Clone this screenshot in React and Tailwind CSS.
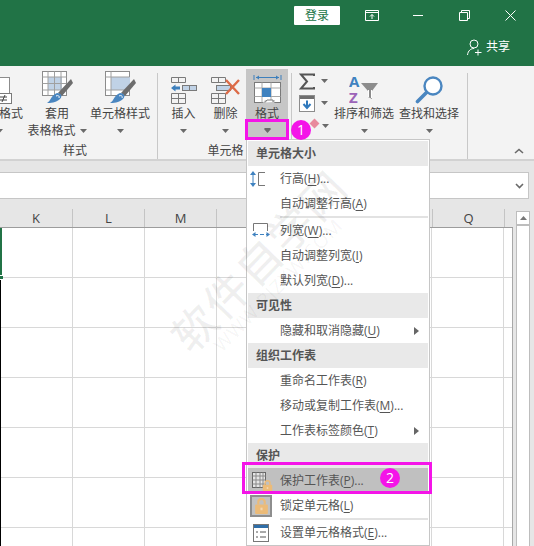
const Caret = ({ className = "" }) => (
  <svg width="7" height="4" viewBox="0 0 7 4" className={className}>
    <path d="M0 0H7L3.5 4Z" fill="#6a6a6a" />
  </svg>
);

const TableBrush = ({ variant }) => (
  <svg width="32" height="34" viewBox="0 0 32 34">
    <rect x="1.5" y="1.5" width="24" height="24" fill="#fff" stroke="#8c8c8c" />
    {variant === "a" ? (
      <>
        <rect x="7" y="7" width="14" height="13" fill="#c0d2e6" />
        <path d="M1.5 7H25.5M1.5 13.5H25.5M1.5 20H25.5M7 1.5V25.5M13.5 1.5V25.5M20 1.5V25.5" stroke="#a0a0a0" />
      </>
    ) : (
      <>
        <rect x="7" y="7" width="19" height="13" fill="#c0d2e6" />
        <path d="M1.5 7H25.5M1.5 20H25.5M7 1.5V25.5M20 20V25.5" stroke="#a0a0a0" />
      </>
    )}
    <path d="M30 9L32 13L21 26L17 23Z" fill="#6d6d6d" />
    <path d="M16 23C20 23 22 26 19 29C15 33 9 33 6 33C10 31 10 25 16 23Z" fill="#4a86c0" />
    <path d="M15 26C17 25 19 26 18 28" stroke="#fff" fill="none" />
  </svg>
);

const InsertIcon = () => (
  <svg width="28" height="28" viewBox="0 0 28 28">
    <path d="M1.5 1.5H15.5V6.5H1.5ZM8.5 1.5V6.5M1.5 17.5H15.5V27.5H1.5ZM1.5 22.5H15.5M8.5 17.5V27.5" fill="none" stroke="#7a7a7a" />
    <rect x="12.5" y="9.5" width="14" height="5" fill="#c0d2e6" stroke="#7a7a7a" />
    <path d="M19.5 9.5V14.5" stroke="#7a7a7a" />
    <path d="M1 12L5.5 8.5V10.5H10V13.5H5.5V15.5Z" fill="#3d7fbc" />
  </svg>
);

const DeleteIcon = () => (
  <svg width="31" height="28" viewBox="0 0 31 28">
    <path d="M1.5 1.5H15.5V6.5H1.5ZM8.5 1.5V6.5M1.5 17.5H15.5V27.5H1.5ZM1.5 22.5H15.5M8.5 17.5V27.5" fill="none" stroke="#7a7a7a" />
    <rect x="6.5" y="9.5" width="14" height="5" fill="#c0d2e6" stroke="#7a7a7a" />
    <path d="M16 4L29 18M29 4L16 18" stroke="#dd6b47" strokeWidth="2.4" />
  </svg>
);

const FormatIcon = () => (
  <svg width="29" height="30" viewBox="0 0 29 30">
    <path d="M1 1V6M28 1V6M3 3.5H26" stroke="#3d7fbc" fill="none" />
    <path d="M3 3.5L6 1.5V5.5ZM26 3.5L23 1.5V5.5Z" fill="#3d7fbc" />
    <rect x="1.5" y="8.5" width="26" height="20" fill="#fff" stroke="#7a7a7a" />
    <path d="M1.5 14H27.5M1.5 22.5H27.5M9 8.5V28.5M18 8.5V28.5" stroke="#a8a8a8" />
    <rect x="9" y="14" width="9" height="9" fill="#3f82c0" />
    <path d="M9 30L12 26H22L21 30Z" fill="#c6c6c6" />
    <path d="M12 28.5L14 26H20V28" fill="#fff" stroke="#7a7a7a" />
  </svg>
);

const SortIcon = () => (
  <svg width="30" height="30" viewBox="0 0 30 30">
    <text x="0" y="13" fontSize="15" fontWeight="700" fill="#3f82c0" fontFamily="'Open Sans',sans-serif">A</text>
    <text x="0" y="29" fontSize="15" fontWeight="700" fill="#9c64b8" fontFamily="'Open Sans',sans-serif">Z</text>
    <path d="M12 9H29L23 17V25L19 23V17Z" fill="#8c8c8c" />
    <path d="M19.5 16V23M22.5 16V24" stroke="#fff" fill="none" />
  </svg>
);

const SearchIcon = () => (
  <svg width="28" height="28" viewBox="0 0 28 28">
    <circle cx="18" cy="10" r="8.5" fill="#fff" stroke="#4a86c0" strokeWidth="2.4" />
    <path d="M11.5 16.5L2.5 25.5" stroke="#4a86c0" strokeWidth="3.6" strokeLinecap="round" />
  </svg>
);

const RibbonButton = ({ width, icon, line1, line2, caretInline, active, margin = "", iconBox = "h-[36px]" }) => (
  <div className={`flex flex-col items-center shrink-0 h-[69px] ${width} ${margin} ${active ? "bg-[#c6c6c6]" : ""}`}>
    <div className={`flex items-end justify-center ${iconBox}`}>{icon}</div>
    <div className="h-[18px] mt-[1px] leading-[18px] whitespace-nowrap text-[12px] text-[#444]">{line1}</div>
    <div className="h-[14px] mt-[1px] flex items-center justify-center gap-[4px] whitespace-nowrap text-[12px] text-[#444] leading-[14px]">
      {line2 && <span>{line2}</span>}
      {caretInline && <Caret />}
    </div>
  </div>
);

const Sep = ({ margin }) => <div className={`w-px h-[86px] mt-[4px] bg-[#c8c8c8] shrink-0 ${margin}`} />;

const U = ({ children }) => <span className="underline underline-offset-2">{children}</span>;

const MenuHeader = ({ children }) => (
  <div className="h-[25px] leading-[25px] pl-[8px] bg-[#e9e9e9] text-[12px] font-bold text-[#555]">{children}</div>
);

const MenuItem = ({ icon, children, arrow, selected, iconBoxed }) => (
  <div className={`h-[25px] flex items-center text-[12px] text-[#555] ${selected ? "bg-[#c0c0c0]" : ""}`}>
    <div className={`w-[22px] h-[22px] ml-[2px] mr-[8px] shrink-0 flex items-center justify-center ${iconBoxed ? "bg-[#c2c2c2] border-2 border-[#8e8e8e]" : ""}`}>{icon}</div>
    <div className="grow whitespace-nowrap">{children}</div>
    {arrow && (
      <svg width="5" height="8" viewBox="0 0 5 8" className="mr-[9px]">
        <path d="M0 0L5 4L0 8Z" fill="#666" />
      </svg>
    )}
  </div>
);

const MenuSep = () => <div className="h-[2px] ml-[32px] bg-[#e2e2e2]" />;

const Badge = ({ n, className }) => (
  <div className={`absolute w-[20px] h-[20px] rounded-full bg-[#f414e8] text-white text-[14px] leading-[20px] text-center ${className}`}>{n}</div>
);

const Lock = ({ w = 14, h = 16 }) => (
  <svg width={w} height={h} viewBox="0 0 14 16" className="shrink-0">
    <path d="M4 7V4.5C4 1 10 1 10 4.5V7" fill="none" stroke="#ecbb78" strokeWidth="2" />
    <rect x="1" y="7" width="12" height="9" rx="1" fill="#ecbb78" />
    <rect x="6" y="10" width="2" height="2.5" fill="#fff" opacity="0.4" />
  </svg>
);

const colWidths = ["w-[73px]", "w-[72px]", "w-[72px]", "w-[72px]", "w-[72px]", "w-[72px]", "w-[72px]", "w-[8px]"];
const colNames = ["K", "L", "M", "", "", "", "Q", ""];

export default function App() {
  return (
    <div className="relative w-[534px] h-[546px] overflow-hidden bg-[#e6e6e6] font-['Open_Sans','Noto_Sans_CJK_SC',sans-serif]">
      {/* Title bar */}
      <div className="h-[66px] bg-[#217346] text-white">
        <div className="h-[32px] flex items-start justify-end pt-[6px]">
          <div className="w-[46px] h-[19px] bg-white text-[#217346] text-[12px] leading-[19px] text-center rounded-[1px]">登录</div>
          <svg width="14" height="11" viewBox="0 0 14 11" className="ml-[25px] mt-[4px]">
            <path d="M.5.5H13.5V10.5H.5ZM.5 2.5H13.5M7 9V4.5M5 6.5L7 4.5L9 6.5" fill="none" stroke="#fff" />
          </svg>
          <div className="w-[10px] h-px bg-white ml-[34px] mt-[9px]" />
          <svg width="11" height="11" viewBox="0 0 11 11" className="ml-[36px] mt-[4px]">
            <path d="M.5 2.5H8.5V10.5H.5ZM2.5 2.5V.5H10.5V8.5H8.5" fill="none" stroke="#fff" />
          </svg>
          <svg width="11" height="11" viewBox="0 0 11 11" className="ml-[35px] mr-[18px] mt-[4px]">
            <path d="M.5.5L10.5 10.5M10.5.5L.5 10.5" stroke="#fff" />
          </svg>
        </div>
        <div className="flex items-center justify-end h-[30px] pr-[24px] gap-[4px]">
          <svg width="15" height="17" viewBox="0 0 15 17">
            <circle cx="7" cy="5" r="4" fill="none" stroke="#fff" />
            <path d="M.5 16C1 11.5 4 9.5 7 9.5" fill="none" stroke="#fff" />
            <path d="M8 13.5H14.5M11 10.5V16.5" stroke="#fff" />
          </svg>
          <span className="text-[12px]">共享</span>
        </div>
      </div>

      {/* Ribbon */}
      <div className="relative h-[95px] bg-[#f3f3f3] border-b-2 border-[#d2d2d2]">
        <div className="flex h-full pt-[3px]">
          <div className="flex flex-col items-center">
            <div className="flex">
              <RibbonButton
                width="w-[48px]"
                margin="ml-[-25px] mr-[4px]"
                caretInline
                line1="条件格式"
                icon={
                  <svg width="26" height="28" viewBox="0 0 26 28">
                    <rect x="1.5" y="1.5" width="22" height="20" fill="#fff" stroke="#8c8c8c" />
                    <rect x="7" y="7" width="7" height="7" fill="#3f82c0" />
                    <rect x="7" y="14" width="7" height="5" fill="#dd6b47" />
                    <rect x="9.5" y="17.5" width="16" height="10" fill="#fff" stroke="#7a7a7a" />
                    <path d="M14 21H21M14 24H21M19 19L16 26" stroke="#444" fill="none" />
                  </svg>
                }
              />
              <RibbonButton width="w-[60px]" margin="mr-[3px]" caretInline line1="套用" line2="表格格式" icon={<TableBrush variant="a" />} />
              <RibbonButton width="w-[60px]" caretInline line1="单元格样式" icon={<TableBrush variant="b" />} />
            </div>
            <div className="text-[12px] text-[#444] leading-[16px] mt-[5px]">样式</div>
          </div>
          <Sep margin="ml-[7px] mr-[5px]" />
          <div className="flex flex-col items-center">
            <div className="flex">
              <RibbonButton width="w-[41px]" margin="mr-px" caretInline line1="插入" icon={<InsertIcon />} />
              <RibbonButton width="w-[41px]" caretInline line1="删除" icon={<DeleteIcon />} />
              <RibbonButton width="w-[42px]" active caretInline line1="格式" icon={<FormatIcon />} />
            </div>
            <div className="text-[12px] text-[#444] leading-[16px] mt-[5px]">单元格</div>
          </div>
          <Sep margin="ml-[3px] mr-[7px]" />
          <div className="flex flex-col w-[34px] shrink-0 gap-[4px] pt-[3px]">
            <div className="flex items-center gap-[6px] h-[18px]">
              <svg width="16" height="17" viewBox="0 0 16 17"><path d="M15 3V1.5H2L8 8.5L2 15.5H15V14" fill="none" stroke="#555" strokeWidth="2" /></svg>
              <Caret />
            </div>
            <div className="flex items-center gap-[4px] h-[18px]">
              <svg width="16" height="17" viewBox="0 0 16 17">
                <rect x=".5" y=".5" width="15" height="16" fill="#fff" stroke="#8c8c8c" />
                <rect x="1" y="1" width="14" height="3" fill="#6e6e6e" />
                <path d="M8 5.5V12M4.5 9L8 13L11.5 9" fill="none" stroke="#2f79bd" strokeWidth="2" />
              </svg>
              <Caret className="ml-[2px]" />
            </div>
            <div className="flex items-center h-[18px] pl-[23px] pt-[1px]">
              <Caret />
            </div>
          </div>
          <RibbonButton width="w-[62px]" caretInline line1="排序和筛选" icon={<SortIcon />} />
          <RibbonButton width="w-[62px]" margin="ml-[3px]" caretInline line1="查找和选择" icon={<SearchIcon />} />
          <Sep margin="ml-[7px]" />
          <div className="grow flex justify-end items-end pr-[10px] pb-[5px]">
            <svg width="10" height="6" viewBox="0 0 10 6"><path d="M1 5L5 1.5L9 5" fill="none" stroke="#6a6a6a" strokeWidth="1.6" /></svg>
          </div>
        </div>
      </div>

      {/* Formula bar */}
      <div className="h-[11px]" />
      <div className="h-[27px] w-[529px] bg-white border-y border-r border-[#c6c6c6] flex items-center justify-end pr-[4px]">
        <svg width="9" height="6" viewBox="0 0 9 6"><path d="M1 1L4.5 4.5L8 1" fill="none" stroke="#6a6a6a" strokeWidth="1.6" /></svg>
      </div>
      <div className="h-[10px]" />

      {/* Sheet */}
      <div className="flex">
        <div className="w-[513px] shrink-0">
          <div className="flex h-[19px] border-b border-[#9c9c9c]">
            {colWidths.map((w, i) => (
              <div key={i} className={`${w} text-center text-[13px] leading-[18px] text-[#444] ${i < 7 ? "border-r border-[#c4c4c4]" : ""}`}>{colNames[i]}</div>
            ))}
          </div>
          <div className="relative bg-white h-[320px] border-r border-[#a8a8a8]">
            {[0, 1, 2, 3, 4, 5, 6].map((r) => (
              <div key={r} className="flex h-[50px] border-b border-[#d8d8d8]">
                {colWidths.map((w, i) => (
                  <div key={i} className={`${w} ${i < 7 ? "border-r border-[#d8d8d8]" : ""}`} />
                ))}
              </div>
            ))}
            <div className="absolute left-0 top-0 w-[2px] h-[47px] bg-[#217346]" />
            <div className="absolute left-0 top-[48px] w-[3px] h-[3px] bg-[#217346]" />
            <div className="absolute left-0 top-[52px] bottom-0 w-px bg-black" />
          </div>
        </div>
        <div className="ml-[3px] w-[14px] mt-[2px] bg-white border-x border-[#bdbdbd] h-[340px]">
          <div className="h-[15px] border-y-2 border-t border-[#bdbdbd] flex items-center justify-center bg-white">
            <svg width="7" height="4" viewBox="0 0 7 4"><path d="M0 4H7L3.5 0Z" fill="#777" /></svg>
          </div>
        </div>
      </div>

      {/* Dropdown menu */}
      <div className="absolute left-[246px] top-[139px] w-[184px] h-[407px] bg-white border border-[#c6c6c6] p-px">
        <MenuHeader>单元格大小</MenuHeader>
        <MenuItem icon={
          <svg width="22" height="16" viewBox="0 0 22 16">
            <path d="M3 2V14" stroke="#3f82c0" /><path d="M3 0L6 4H0ZM3 16L6 12H0Z" fill="#3f82c0" />
            <path d="M15 1.5H8.5V14.5H15" fill="none" stroke="#777" />
          </svg>
        }>行高(<U>H</U>)...</MenuItem>
        <MenuItem>自动调整行高(<U>A</U>)</MenuItem>
        <MenuSep />
        <MenuItem icon={
          <svg width="18" height="15" viewBox="0 0 18 15">
            <path d="M1.5 8V.5H15.5V8" fill="none" stroke="#777" />
            <path d="M2 11.5H16" stroke="#3f82c0" strokeDasharray="4 2" /><path d="M0 11.5L3.5 9V14ZM18 11.5L14.5 9V14Z" fill="#3f82c0" />
          </svg>
        }>列宽(<U>W</U>)...</MenuItem>
        <MenuItem>自动调整列宽(<U>I</U>)</MenuItem>
        <MenuItem>默认列宽(<U>D</U>)...</MenuItem>
        <MenuHeader>可见性</MenuHeader>
        <MenuItem arrow>隐藏和取消隐藏(<U>U</U>)</MenuItem>
        <MenuHeader>组织工作表</MenuHeader>
        <MenuItem>重命名工作表(<U>R</U>)</MenuItem>
        <MenuItem>移动或复制工作表(<U>M</U>)...</MenuItem>
        <MenuItem arrow>工作表标签颜色(<U>T</U>)</MenuItem>
        <MenuHeader>保护</MenuHeader>
        <MenuItem selected icon={
          <div className="relative w-[18px] h-[18px]">
            <svg width="14" height="16" viewBox="0 0 14 16">
              <rect x=".5" y=".5" width="13" height="15" fill="#e6e6e6" stroke="#666" />
              <path d="M.5 4H13.5M.5 8H13.5M.5 12H13.5M4 .5V15.5M8 .5V15.5M11 .5V15.5" stroke="#8a8a8a" />
            </svg>
            <div className="absolute right-[-3px] bottom-[-2px]"><Lock w={11} h={13} /></div>
          </div>
        }>保护工作表(<U>P</U>)...</MenuItem>
        <MenuItem iconBoxed icon={<Lock w={15} h={17} />}>锁定单元格(<U>L</U>)</MenuItem>
        <MenuSep />
        <MenuItem icon={
          <svg width="16" height="18" viewBox="0 0 16 18">
            <rect x=".5" y=".5" width="15" height="17" fill="#fff" stroke="#777" />
            <rect x="1" y="1" width="14" height="3" fill="#2f6ea8" />
            <path d="M3 8H5M7 8H13M3 13H5M7 13H13" stroke="#555" />
          </svg>
        }>设置单元格格式(<U>E</U>)...</MenuItem>
      </div>

      {/* Watermark */}
      <div className="absolute left-[133px] top-[231px] w-[252px] h-[60px] -rotate-[46deg] text-center text-[44px] leading-[60px] tracking-[2px] font-medium text-black/[0.06] whitespace-nowrap pointer-events-none">软件自学网</div>
      <div className="absolute left-[173px] top-[272px] w-[210px] h-[26px] -rotate-[46deg] text-center text-[19px] leading-[26px] tracking-[1px] font-medium text-black/[0.05] whitespace-nowrap pointer-events-none">WWW.RJZXW.COM</div>

      {/* Callouts */}
      <div className="absolute left-[245px] top-[119px] w-[44px] h-[21px] border-[3px] border-[#f414e8] flex items-center justify-center pointer-events-none">
        <Caret />
      </div>
      <div className="absolute left-[242px] top-[462px] w-[190px] h-[32px] border-[3px] border-[#f414e8] pointer-events-none" />
      <div className="absolute left-[311px] top-[120px] w-[7px] h-[7px] rotate-45 bg-[#e88a9c]" />
      <Badge n="1" className="left-[291px] top-[120px]" />
      <Badge n="2" className="left-[380px] top-[468px]" />
    </div>
  );
}
